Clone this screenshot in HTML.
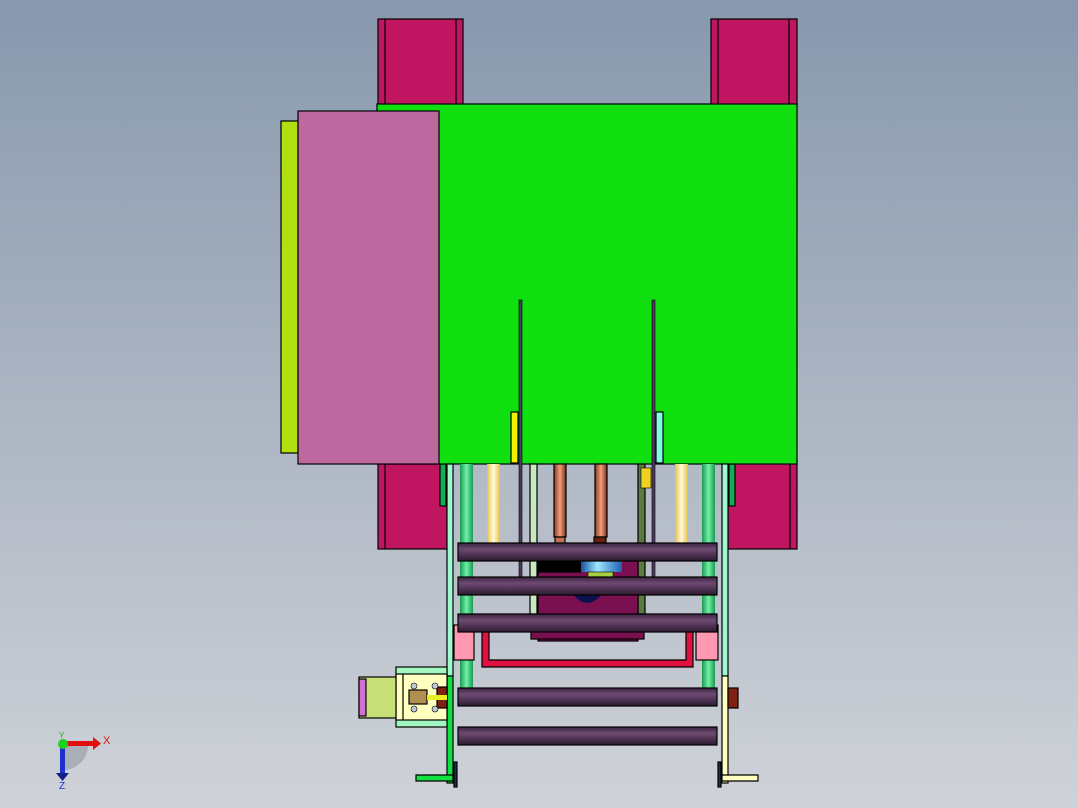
<!DOCTYPE html>
<html><head><style>
html,body{margin:0;padding:0;}
body{width:1078px;height:808px;overflow:hidden;background:linear-gradient(#8898ad,#cfd2d8);}
</style></head><body>
<svg width="1078" height="808" viewBox="0 0 1078 808" xmlns="http://www.w3.org/2000/svg" style="position:absolute;left:0;top:0">
<defs>
<linearGradient id="roll" x1="0" y1="0" x2="0" y2="1"><stop offset="0" stop-color="#3a2440"/><stop offset="0.35" stop-color="#6e4a72"/><stop offset="1" stop-color="#2c1b30"/></linearGradient>
<linearGradient id="gt" x1="0" y1="0" x2="1" y2="0"><stop offset="0" stop-color="#1a9a50"/><stop offset="0.5" stop-color="#70f0a8"/><stop offset="1" stop-color="#1a9a50"/></linearGradient>
<linearGradient id="cr" x1="0" y1="0" x2="1" y2="0"><stop offset="0" stop-color="#e8c040"/><stop offset="0.5" stop-color="#fffbe0"/><stop offset="1" stop-color="#e8c040"/></linearGradient>
<linearGradient id="cu" x1="0" y1="0" x2="1" y2="0"><stop offset="0" stop-color="#8a3a20"/><stop offset="0.5" stop-color="#f0a080"/><stop offset="1" stop-color="#7a3018"/></linearGradient>
<linearGradient id="bl" x1="0" y1="0" x2="1" y2="0"><stop offset="0" stop-color="#1a50a0"/><stop offset="0.4" stop-color="#a0e8ff"/><stop offset="1" stop-color="#2060b0"/></linearGradient>
</defs>
<g stroke="#000" stroke-width="1.2">
<!-- top magenta -->
<rect x="378" y="19" width="85" height="86" fill="#c01560"/>
<line x1="385" y1="19" x2="385" y2="105"/><line x1="456" y1="19" x2="456" y2="105"/>
<rect x="711" y="19" width="86" height="86" fill="#c01560"/>
<line x1="718" y1="19" x2="718" y2="105"/><line x1="789" y1="19" x2="789" y2="105"/>
<!-- lower magenta -->
<rect x="378" y="460" width="69" height="89" fill="#c01560"/>
<line x1="385" y1="460" x2="385" y2="549"/>
<rect x="728" y="460" width="69" height="89" fill="#c01560"/>
<line x1="790" y1="460" x2="790" y2="549"/>
<rect x="440" y="464" width="6" height="42" fill="#10b050"/>
<rect x="729" y="464" width="6" height="42" fill="#10b050"/>
<!-- green main -->
<rect x="377" y="104" width="420" height="360" fill="#10e010"/>
<rect x="281" y="121" width="17" height="332" fill="#b0e010"/>
<rect x="298" y="111" width="141" height="353" fill="#be68a0"/>
<!-- cream tubes -->
<rect x="487" y="464" width="13" height="80" fill="url(#cr)" stroke="none"/>
<rect x="675" y="464" width="13" height="80" fill="url(#cr)" stroke="none"/>
<!-- copper -->
<rect x="554" y="464" width="12" height="73" fill="url(#cu)"/>
<rect x="595" y="464" width="12" height="73" fill="url(#cu)"/>
<rect x="555" y="537" width="10" height="7" fill="#c07050"/>
<rect x="594" y="537" width="12" height="7" fill="#6a2010"/>
<!-- light posts -->
<rect x="530" y="464" width="7" height="150" fill="#c8e8c0"/>
<rect x="638" y="464" width="7" height="150" fill="#5a7a40"/>
<rect x="641" y="468" width="10" height="20" fill="#f0d020" stroke-width="0.6"/>
<!-- center mech -->
<rect x="538" y="561" width="100" height="80" fill="#7a1050"/>
<rect x="538" y="561" width="43" height="11" fill="#000"/>
<rect x="581" y="561" width="41" height="11" fill="url(#bl)" stroke="none"/>
<rect x="588" y="572" width="25" height="6" fill="#a8d040" stroke-width="0.6"/>
<path d="M573 594 Q587 612 602 594 Z" fill="#0a1050" stroke="none"/>
<rect x="531" y="631" width="113" height="8" fill="#7a1050"/>
<!-- dark rods -->
<rect x="519" y="300" width="3" height="280" fill="#4a3a60" stroke-width="0.6"/>
<rect x="652" y="300" width="3" height="280" fill="#4a3a60" stroke-width="0.6"/>
<rect x="511" y="412" width="7" height="51" fill="#f0f000"/>
<rect x="656" y="412" width="7" height="51" fill="#80ffe8"/>
<!-- green tubes -->
<rect x="460" y="464" width="13" height="226" fill="url(#gt)" stroke="none"/>
<rect x="702" y="464" width="13" height="226" fill="url(#gt)" stroke="none"/>
<!-- pink blocks -->
<rect x="454" y="625" width="20" height="35" fill="#ff98b0"/>
<rect x="696" y="625" width="22" height="35" fill="#ff98b0"/>
<!-- red U -->
<path d="M482 632 V667 H693 V632 H686 V660 H489 V632 Z" fill="#e01040"/>
<!-- rollers -->
<rect x="458" y="543" width="259" height="18" fill="url(#roll)"/>
<rect x="458" y="577" width="259" height="18" fill="url(#roll)"/>
<rect x="458" y="614" width="259" height="18" fill="url(#roll)"/>
<rect x="458" y="688" width="259" height="18" fill="url(#roll)"/>
<rect x="458" y="727" width="259" height="18" fill="url(#roll)"/>
<!-- rails -->
<rect x="447" y="464" width="6" height="212" fill="#a0f8d0"/>
<rect x="447" y="676" width="6" height="107" fill="#10e040"/>
<path d="M416 775 H453 V781 H416 Z" fill="#10e040"/>
<rect x="454" y="762" width="3" height="25" fill="#203050"/>
<rect x="722" y="464" width="6" height="212" fill="#a0f8d0"/>
<rect x="722" y="676" width="6" height="107" fill="#ffffc0"/>
<path d="M722 775 H758 V781 H722 Z" fill="#ffffc0"/>
<rect x="718" y="762" width="3" height="25" fill="#203050"/>
<rect x="728" y="688" width="10" height="20" fill="#802010"/>
<!-- motor -->
<rect x="396" y="667" width="51" height="60" fill="#a0f8c0"/>
<rect x="396" y="674" width="51" height="46" fill="#ffffc0"/>
<line x1="403" y1="674" x2="403" y2="720"/>
<rect x="359" y="677" width="37" height="41" fill="#c8e078"/>
<rect x="359" y="679" width="7" height="37" fill="#d070d0"/>
<rect x="437" y="687" width="10" height="21" fill="#802010"/>
<rect x="409" y="690" width="18" height="14" fill="#b09050"/>
<rect x="427" y="695" width="20" height="5" fill="#e8f020" stroke="none"/>
<circle cx="414" cy="686" r="3" fill="#c0c8d8" stroke-width="0.6"/>
<circle cx="414" cy="709" r="3" fill="#c0c8d8" stroke-width="0.6"/>
<circle cx="435" cy="686" r="3" fill="#c0c8d8" stroke-width="0.6"/>
<circle cx="435" cy="709" r="3" fill="#c0c8d8" stroke-width="0.6"/>
</g>
<!-- axis triad -->
<path d="M63 745 L88 745 A25 25 0 0 1 63 770 Z" fill="#8a8f98" opacity="0.5"/>
<rect x="62" y="741" width="32" height="5" fill="#e01010"/>
<path d="M93 737 L101 743.5 L93 750 Z" fill="#e01010"/>
<rect x="60" y="744" width="5" height="30" fill="#2030d0"/>
<path d="M56 773 L69 773 L62.5 781 Z" fill="#102080"/>
<circle cx="63" cy="744" r="5" fill="#20d020"/>
<text x="103" y="744" font-family="Liberation Sans" font-size="11" fill="#e01010">X</text>
<text x="59" y="789" font-family="Liberation Sans" font-size="10" fill="#2030d0">Z</text>
<text x="59" y="738" font-family="Liberation Sans" font-size="8" fill="#20b020">Y</text>
</svg>
</body></html>
